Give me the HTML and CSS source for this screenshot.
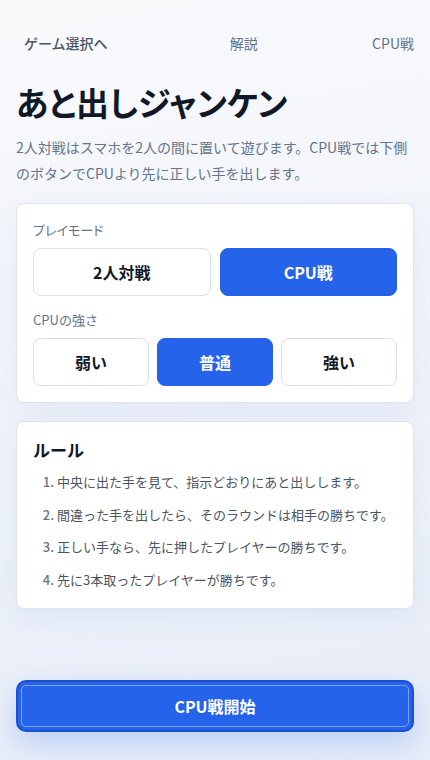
FILE: index.html
```html
<!DOCTYPE html>
<html lang="ja">
<head>
<meta charset="utf-8">
<meta name="viewport" content="width=device-width, initial-scale=1">
<title>あと出しジャンケン</title>
<link rel="stylesheet" href="styles.css">
</head>
<body>
<div class="page">
  <nav class="nav">
    <a class="nav-back" href="#">ゲーム選択へ</a>
    <a class="nav-link" href="#">解説</a>
    <a class="nav-link" href="#">CPU戦</a>
  </nav>

  <header class="hero">
    <h1 class="title">あと出しジャンケン</h1>
    <p class="lead">2人対戦はスマホを2人の間に置いて遊びます。CPU戦では下側のボタンでCPUより先に正しい手を出します。</p>
  </header>

  <section class="card settings">
    <div class="label label-mode">プレイモード</div>
    <div class="choices two">
      <button class="choice">2人対戦</button>
      <button class="choice active">CPU戦</button>
    </div>
    <div class="label label-gap">CPUの強さ</div>
    <div class="choices three">
      <button class="choice">弱い</button>
      <button class="choice active">普通</button>
      <button class="choice">強い</button>
    </div>
  </section>

  <section class="card rules">
    <h2 class="rules-title">ルール</h2>
    <ol class="rules-list">
      <li>中央に出た手を見て、指示どおりにあと出しします。</li>
      <li>間違った手を出したら、そのラウンドは相手の勝ちです。</li>
      <li>正しい手なら、先に押したプレイヤーの勝ちです。</li>
      <li>先に3本取ったプレイヤーが勝ちです。</li>
    </ol>
  </section>

  <footer class="footer">
    <button class="start">CPU戦開始</button>
  </footer>
</div>
</body>
</html>
```

FILE: styles.css
```css
* { box-sizing: border-box; }

html, body {
  margin: 0;
  padding: 0;
}

body {
  font-family: "Noto Sans CJK JP", "Noto Sans", sans-serif;
  background: linear-gradient(170deg, #f9fafc 0%, #eef2f9 55%, #e7edf8 100%);
  color: #0f172a;
  min-height: 760px;
}

.page {
  min-height: 760px;
  display: flex;
  flex-direction: column;
  padding: 24px 16px 28px;
}

.nav {
  display: flex;
  justify-content: space-between;
  align-items: center;
}

.nav a {
  text-decoration: none;
  font-size: 14px;
  line-height: 22px;
  padding: 8px 0;
}

.nav-back {
  color: #4b5563;
  font-weight: 500;
  padding: 8px !important;
}

.nav-link {
  color: #64748b;
}

.hero {
  margin-top: 18px;
}

.title {
  margin: 0;
  font-size: 33px;
  line-height: 44px;
  font-weight: 700;
  color: #111827;
  font-feature-settings: "palt";
}

.lead {
  margin: 10px 0 0;
  font-size: 14px;
  line-height: 26px;
  color: #64748b;
}

.card {
  background: #ffffff;
  border: 1px solid #dde4ee;
  border-radius: 8px;
  padding: 16px;
  box-shadow: 0 8px 28px rgba(59, 100, 200, 0.07);
}

.settings {
  margin-top: 17px;
}

.label {
  font-size: 13px;
  line-height: 20px;
  color: #64748b;
  margin-bottom: 8px;
}

.label-mode {
  font-feature-settings: "palt";
}

.label-gap {
  margin-top: 14px;
}

.choices {
  display: grid;
  gap: 8px;
}

.choices.two { grid-template-columns: 1fr 1fr; gap: 9px; }
.choices.three { grid-template-columns: 1fr 1fr 1fr; }

.choice {
  height: 48px;
  border: 1px solid #d9dfe8;
  border-radius: 8px;
  background: #ffffff;
  color: #111827;
  font-family: inherit;
  font-size: 16px;
  font-weight: 700;
}

.choice.active {
  background: #2563eb;
  border-color: #2563eb;
  color: #ffffff;
}

.rules {
  margin-top: 18px;
}

.rules-title {
  margin: 0;
  font-size: 17px;
  line-height: 24px;
  font-weight: 700;
  color: #111827;
}

.rules-list {
  margin: 8px 0 0;
  padding-left: 24px;
  display: flex;
  flex-direction: column;
  gap: 8px;
}

.rules-list li {
  font-size: 13px;
  line-height: 24.5px;
  color: #4b5563;
}

.rules-list li::marker {
  font-weight: 500;
  color: #6b7280;
}

.footer {
  margin-top: auto;
}

.start {
  width: 100%;
  height: 52px;
  background: #2563eb;
  border: 2px solid #1d4fcf;
  border-radius: 10px;
  color: #ffffff;
  font-family: inherit;
  font-size: 16px;
  font-weight: 700;
  outline: 1px solid rgba(255, 255, 255, 0.4);
  outline-offset: -6px;
  box-shadow: 0 12px 28px rgba(37, 99, 235, 0.22);
}
```
